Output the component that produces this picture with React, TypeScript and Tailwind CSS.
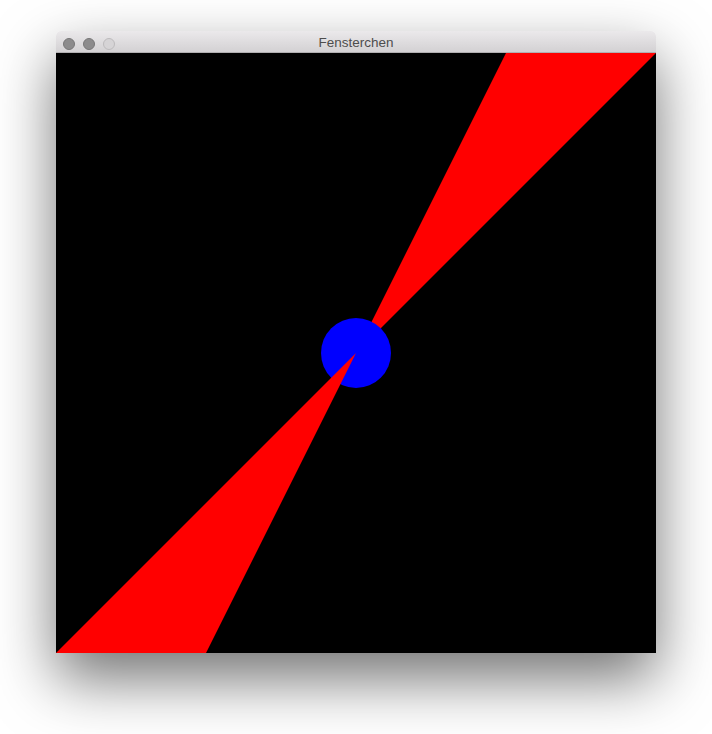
import React from 'react';

const TrafficLight = ({ dim }: { dim?: boolean }) => (
  <div
    className={
      dim
        ? 'w-3 h-3 rounded-full bg-[#d6d4d6] border border-[#bdbbbd]'
        : 'w-3 h-3 rounded-full bg-[#8c8b8c] border border-[#777677]'
    }
  />
);

const Canvas = () => (
  <svg width="600" height="600" viewBox="0 0 600 600" className="block">
    <rect x="0" y="0" width="600" height="600" fill="#000000" />
    <polygon points="300,300 450,0 600,0" fill="#ff0000" />
    <circle cx="300" cy="300" r="35" fill="#0000ff" />
    <polygon points="300,300 0,600 150,600" fill="#ff0000" />
  </svg>
);

export default function App() {
  return (
    <div className="w-[712px] h-[734px] bg-white pt-[31px] pl-[56px] font-['Liberation_Sans',sans-serif]">
      <div className="w-[600px] flex flex-col rounded-t-[5px] overflow-hidden shadow-[0_26px_60px_0_rgba(0,0,0,0.55)]">
        <div className="relative h-[22px] flex items-center pt-[4px] bg-gradient-to-b from-[#ebe9eb] to-[#d3d1d3] border-b border-[#b1afb1]">
          <div className="flex items-center gap-2 pl-[7px]">
            <TrafficLight />
            <TrafficLight />
            <TrafficLight dim />
          </div>
          <div className="absolute inset-0 pt-[4px] flex items-center justify-center text-[13.5px] text-[#4d4d4d]">
            Fensterchen
          </div>
        </div>
        <Canvas />
      </div>
    </div>
  );
}
